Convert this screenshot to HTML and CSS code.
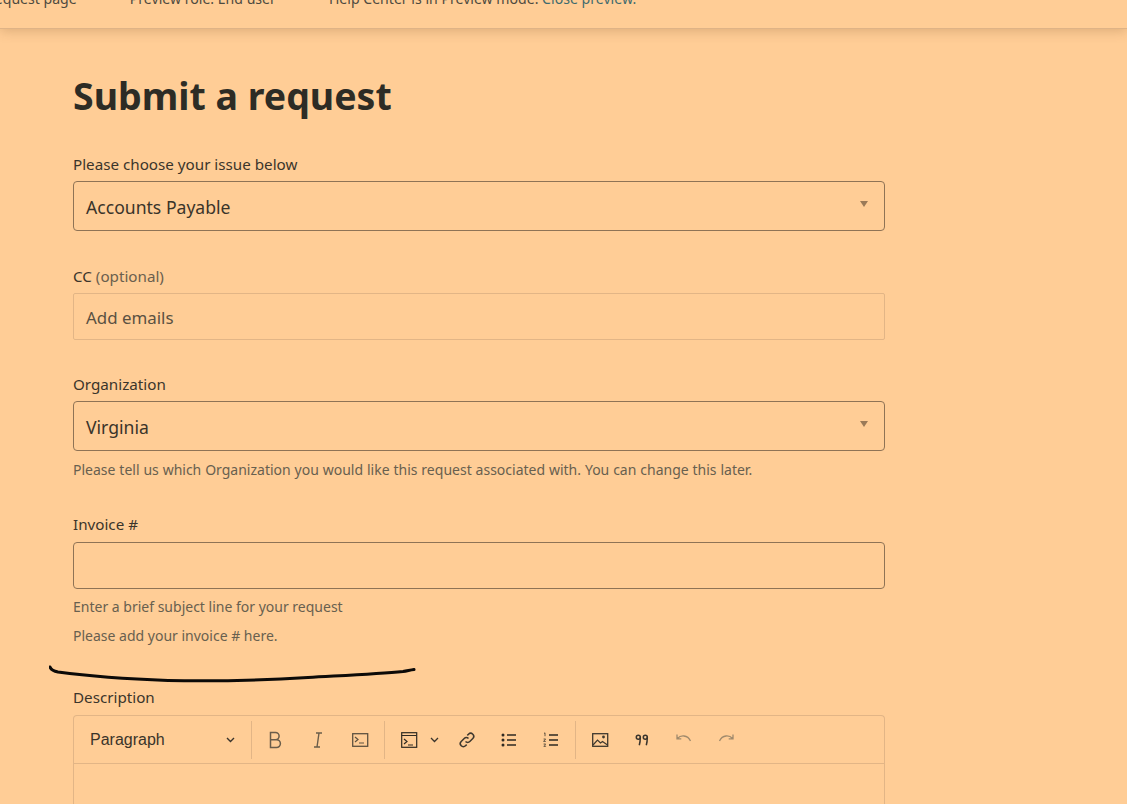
FILE: index.html
```html
<!DOCTYPE html>
<html lang="en">
<head>
    <meta charset="UTF-8">
    <meta name="viewport" content="width=device-width, initial-scale=1.0">
    <title>Submit a request</title>
    <link rel="stylesheet" href="styles.css">
</head>
<body>
    <div class="preview-bar">
        <span class="preview-page">Request page</span>
        <span class="preview-role">Preview role: End user</span>
        <span class="preview-mode">Help Center is in Preview mode. <a href="#">Close preview.</a></span>
    </div>

    <main class="content">
        <h1>Submit a request</h1>

        <div class="field field-issue">
            <label>Please choose your issue below</label>
            <div class="select-box">Accounts Payable<span class="caret"></span></div>
        </div>

        <div class="field field-cc">
            <label>CC <span class="optional">(optional)</span></label>
            <div class="text-box muted-box">Add emails</div>
        </div>

        <div class="field field-org">
            <label>Organization</label>
            <div class="select-box">Virginia<span class="caret"></span></div>
            <p class="hint hint-long">Please tell us which Organization you would like this request associated with. You can change this later.</p>
        </div>

        <div class="field field-invoice">
            <label>Invoice #</label>
            <div class="text-box"></div>
            <p class="hint">Enter a brief subject line for your request</p>
            <p class="hint hint-second">Please add your invoice # here.</p>
        </div>

        <div class="field field-desc">
            <label>Description</label>
            <div class="editor">
                <div class="toolbar">
                    <div class="tool-group para-group">
                        <span class="para-name">Paragraph</span>
                        <svg class="chev" width="9" height="6" viewBox="0 0 9 6"><path d="M1 1l3.500 3.500L8 1" fill="none" stroke="#3a342c" stroke-width="1.400"/></svg>
                    </div>
                    <div class="tool-group text-group">
                        <svg width="22" height="22" viewBox="0 0 22 22"><path d="M6.500 3.500h5a3.600 3.600 0 0 1 0 7.200h-5zM6.500 10.700h6a3.900 3.900 0 0 1 0 7.800h-6z" fill="none" stroke="#6b5d4a" stroke-width="1.500"/></svg>
                        <svg width="22" height="22" viewBox="0 0 22 22"><path d="M9 4h6M7 18h6M12 4l-2 14" fill="none" stroke="#6b5d4a" stroke-width="1.400"/></svg>
                        <svg width="22" height="22" viewBox="0 0 22 22"><rect x="3.700" y="4.700" width="15" height="12.600" fill="none" stroke="#5f5240" stroke-width="1.300"/><path d="M6 8l3 2.500L6 13M10 14h5" fill="none" stroke="#5f5240" stroke-width="1.200"/></svg>
                    </div>
                    <div class="tool-group insert-group">
                        <svg width="22" height="22" viewBox="0 0 22 22"><rect x="3.700" y="3.700" width="15" height="14.600" fill="none" stroke="#2f2a22" stroke-width="1.200"/><path d="M3.700 6.500h15M6 10l3 2.500L6 15M10 16h5" fill="none" stroke="#2f2a22" stroke-width="1.200"/></svg>
                        <svg class="chev chev-small" width="9" height="6" viewBox="0 0 9 6"><path d="M1 1l3.500 3.500L8 1" fill="none" stroke="#3a342c" stroke-width="1.300"/></svg>
                        <svg class="link-icon" width="22" height="22" viewBox="0 0 22 22"><path d="M9.500 12.500a3 3 0 0 0 4.300 0l3-3a3 3 0 0 0-4.300-4.300l-1.200 1.200M12.500 9.500a3 3 0 0 0-4.300 0l-3 3a3 3 0 0 0 4.300 4.300l1.200-1.200" fill="none" stroke="#3f382e" stroke-width="1.500"/></svg>
                        <svg width="22" height="22" viewBox="0 0 22 22"><circle cx="5" cy="6" r="1.500" fill="#2f2a22"/><circle cx="5" cy="11" r="1.500" fill="#2f2a22"/><circle cx="5" cy="16" r="1.500" fill="#2f2a22"/><path d="M9 6h9M9 11h9M9 16h9" stroke="#2f2a22" stroke-width="1.400"/></svg>
                        <svg width="22" height="22" viewBox="0 0 22 22"><path d="M4 4.500l1-.7v3.400M3.600 10h2l-2 2.400h2.200M3.600 15h2l-1 1.200 1 1.200h-2" fill="none" stroke="#3f382e" stroke-width=".8"/><path d="M9 6h9M9 11h9M9 16h9" stroke="#2f2a22" stroke-width="1.400"/></svg>
                    </div>
                    <div class="tool-group media-group">
                        <svg width="22" height="22" viewBox="0 0 22 22"><rect x="3.700" y="4.700" width="15" height="12.600" fill="none" stroke="#3f382e" stroke-width="1.300"/><circle cx="14.500" cy="8" r="1.400" fill="#3f382e"/><path d="M4 16l4.500-5 3 3 2-1.500 5 3.500" fill="none" stroke="#3f382e" stroke-width="1.200"/></svg>
                        <svg width="22" height="22" viewBox="0 0 22 22"><circle cx="7.300" cy="8.300" r="2" fill="none" stroke="#3a342c" stroke-width="1.500"/><circle cx="14.300" cy="8.300" r="2" fill="none" stroke="#3a342c" stroke-width="1.500"/><path d="M9.300 8.300c0 3.500-.3 5.500-1 8M16.300 8.300c0 3.500-.3 5.500-1 8" fill="none" stroke="#3a342c" stroke-width="1.500"/></svg>
                        <svg width="22" height="22" viewBox="0 0 22 22"><path d="M4.500 9.500c3-3.500 10-4 13 2.500M4 5.500v4.300h4.300" fill="none" stroke="#a08a6c" stroke-width="1.300"/></svg>
                        <svg width="22" height="22" viewBox="0 0 22 22"><path d="M17.500 9.500c-3-3.500-10-4-13 2.500M18 5.500v4.300h-4.300" fill="none" stroke="#a08a6c" stroke-width="1.300"/></svg>
                    </div>
                </div>
            </div>
        </div>
    </main>

    <!-- pen mark someone drew over the screenshot -->
    <svg class="pen-mark" width="380" height="26" viewBox="0 0 380 26">
        <path d="M1 3c1 3 3 4 8 5c30 4 70 7 110 8.500c50 1 90 0 140-3c35-2 70-3.500 95-6c4-.5 7-1.500 11-2" fill="none" stroke="#0c0a08" stroke-width="3" stroke-linecap="round"/>
    </svg>
</body>
</html>
```

FILE: styles.css
```css
html, body {
    height: 804px;
    overflow: hidden;
}
body {
    margin: 0;
    position: relative;
    background-color: #ffcd96;
    color: #2f2d26;
    font-family: "Noto Sans", "Open Sans", Arial, sans-serif;
    font-size: 15.200px;
}
.preview-bar {
    display: flex;
    height: 28px;
    border-bottom: 1px solid #dfb386;
    box-shadow: 0 2px 12px rgba(120, 80, 40, 0.26);
    font-size: 14.100px;
    color: #4e4a40;
    line-height: 1;
    overflow: hidden;
}
.preview-bar span {
    margin-top: -8px;
    white-space: nowrap;
}
.preview-page {
    margin-left: -14px;
}
.preview-role {
    margin-left: 53px;
}
.preview-mode {
    margin-left: 53px;
}
.preview-bar a {
    color: #3f6b6e;
    text-decoration: none;
}
.content {
    width: 812px;
    margin-left: 73px;
}
h1 {
    margin: 42px 0 0;
    font-size: 37.500px;
    line-height: 50px;
    font-weight: 700;
    color: #2d2c25;
}
label {
    display: block;
    height: 20px;
    line-height: 20px;
    margin-bottom: 7px;
    color: #3b352b;
}
.optional {
    color: #6b5f4e;
}
.field-issue {
    margin-top: 33px;
}
.field-cc {
    margin-top: 35px;
}
.field-org {
    margin-top: 34px;
}
.field-invoice {
    margin-top: 34px;
}
.field-invoice label,
.field-desc label {
    margin-bottom: 8px;
}
.field-desc {
    margin-top: 41px;
}
.select-box,
.text-box {
    display: flex;
    align-items: center;
    position: relative;
    box-sizing: border-box;
    padding: 2px 12px 0;
    border: 1px solid #8f7355;
    border-radius: 4px;
    font-size: 17.600px;
    color: #3a342a;
}
.select-box {
    height: 50px;
}
.text-box {
    height: 47px;
}
.muted-box {
    border-color: #e2b586;
    border-radius: 2px;
    font-size: 16.900px;
    color: #5a5142;
}
.caret {
    position: absolute;
    right: 16px;
    top: 19px;
    border-left: 4px solid transparent;
    border-right: 4px solid transparent;
    border-top: 6px solid #9a7a58;
}
.hint {
    margin: 8px 0 0;
    height: 20px;
    line-height: 20px;
    font-size: 14px;
    color: #68604f;
}
.hint-long {
    margin-top: 9px;
    word-spacing: 0.250px;
}
.hint-second {
    margin-top: 9px;
}
.editor {
    box-sizing: border-box;
    height: 89px;
    border: 1px solid #e2b586;
    border-bottom: none;
    border-radius: 4px 4px 0 0;
}
.toolbar {
    display: flex;
    align-items: center;
    height: 47px;
    border-bottom: 1px solid #e2b586;
}
.tool-group {
    display: flex;
    align-items: center;
    height: 38px;
    border-right: 1px solid #e2b586;
}
.para-group {
    width: 178px;
    padding-left: 16px;
    box-sizing: border-box;
    font-family: "Liberation Sans", Arial, sans-serif;
    font-size: 16px;
    color: #3a342a;
}
.para-name {
    flex: 1;
}
.para-group .chev {
    margin-right: 16px;
}
.text-group {
    width: 133px;
    box-sizing: border-box;
    padding-left: 12px;
    gap: 20.500px;
}
.insert-group {
    width: 191px;
    box-sizing: border-box;
    padding-left: 13px;
}
.chev-small {
    margin-left: 10px;
}
.link-icon {
    margin-left: 17px;
}
.insert-group svg:nth-child(4),
.insert-group svg:nth-child(5) {
    margin-left: 20px;
}
.media-group {
    padding-left: 13px;
    gap: 20px;
    border-right: none;
}
.pen-mark {
    position: absolute;
    left: 49px;
    top: 664px;
}
```
